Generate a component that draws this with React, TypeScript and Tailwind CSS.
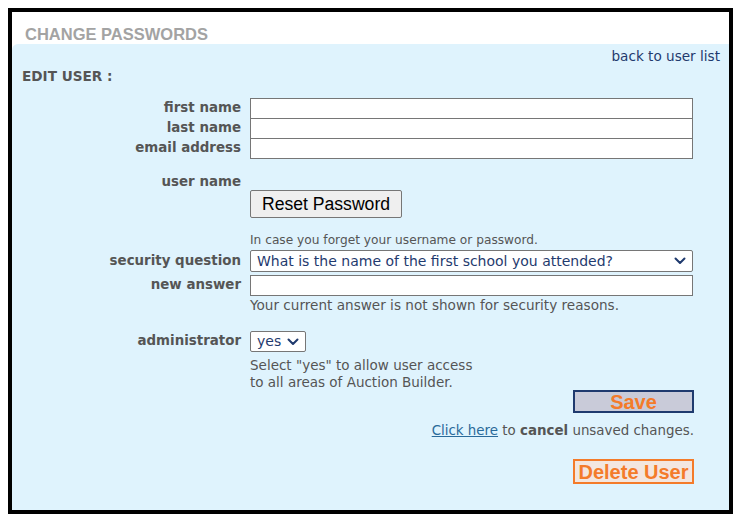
import React from "react";

const V = { fontFamily: '"DejaVu Sans", Verdana, sans-serif' };
const A = { fontFamily: '"Liberation Sans", Arial, sans-serif' };

function Chevron() {
  return (
    <svg width="12" height="8" viewBox="0 0 12 8" className="shrink-0">
      <path d="M1.5 1.5 L6 6 L10.5 1.5" fill="none" stroke="#1f3a6e" strokeWidth="2" strokeLinecap="round" strokeLinejoin="round" />
    </svg>
  );
}

function Label({ children, className = "" }: { children: React.ReactNode; className?: string }) {
  return (
    <div className={"w-[229px] shrink-0 text-right text-[13.4px] font-bold text-[#555]" + " " + className} style={V}>
      {children}
    </div>
  );
}

export default function App() {
  return (
    <div className="w-[741px] h-[518px] bg-white pt-[8px] pl-[8px]">
      <div className="w-[725px] h-[506px] border-4 border-black bg-white flex flex-col">
        <div className="h-[32px] shrink-0 pl-[13px] pt-[14px] text-[16.5px] leading-[17px] font-bold text-[#a3a3a3]" style={A}>
          CHANGE PASSWORDS
        </div>
        <div className="flex-1 bg-[#dff3fd] rounded-tl-[6px] relative">
          <div className="flex justify-end pr-[9px] pt-[4px] text-[13.6px] leading-[16px] text-[#1f3a6e]" style={V}>
            back to user list
          </div>
          <div className="pl-[10px] mt-[5px] text-[13.6px] leading-[14px] font-bold text-[#555]" style={V}>
            EDIT USER :
          </div>

          <div className="mt-[15px] flex flex-col">
            {["first name", "last name", "email address"].map((l, i) => (
              <div key={l} className={"flex items-center gap-[9px]" + (i > 0 ? " -mt-px" : "")}>
                <Label>{l}</Label>
                <div className="w-[443px] h-[21px] bg-white border border-[#767676]" />
              </div>
            ))}
          </div>

          <div className="mt-[15px] flex gap-[9px]">
            <Label className="leading-[16px]">user name</Label>
            <div className="pt-[16px]">
              <div className="w-[152px] h-[28px] bg-[#efefef] border border-[#767676] rounded-[2px] flex items-center justify-center text-[17.6px] text-black" style={A}>
                Reset Password
              </div>
            </div>
          </div>

          <div className="mt-[15px] flex gap-[9px]">
            <div className="w-[229px] shrink-0" />
            <div className="text-[12.2px] leading-[14px] text-[#555]" style={V}>In case you forget your username or password.</div>
          </div>

          <div className="mt-[3px] flex items-center gap-[9px]">
            <Label>security question</Label>
            <div className="w-[443px] h-[22px] bg-white border border-[#767676] rounded-[2px] flex items-center justify-between pl-[6px] pr-[6px] text-[14px] text-[#1f3a6e]" style={V}>
              <span>What is the name of the first school you attended?</span>
              <Chevron />
            </div>
          </div>

          <div className="mt-[3px] flex items-center gap-[9px]">
            <Label>new answer</Label>
            <div className="w-[443px] h-[21px] bg-white border border-[#767676]" />
          </div>

          <div className="mt-[1px] flex gap-[9px]">
            <div className="w-[229px] shrink-0" />
            <div className="text-[13.6px] leading-[16px] text-[#555]" style={V}>Your current answer is not shown for security reasons.</div>
          </div>

          <div className="mt-[18px] flex items-center gap-[9px]">
            <Label>administrator</Label>
            <div className="w-[56px] h-[21px] bg-white border border-[#767676] rounded-[2px] flex items-center gap-[6px] pl-[6px] text-[14px] text-[#1f3a6e]" style={V}>
              <span>yes</span>
              <Chevron />
            </div>
          </div>

          <div className="mt-[5px] flex gap-[9px]">
            <div className="w-[229px] shrink-0" />
            <div className="text-[13.5px] leading-[17px] text-[#555]" style={V}>
              Select "yes" to allow user access
              <br />
              to all areas of Auction Builder.
            </div>
          </div>

          <div className="flex flex-col items-end pr-[35px]">
            <div className="-mt-[1px] w-[121px] h-[23px] bg-[#c9cbd9] border-2 border-[#1f3a6e] flex items-center justify-center text-[20px] font-bold text-[#f47b2a]" style={A}>
              Save
            </div>
            <div className="mt-[10px] text-[13.4px] leading-[16px] text-[#555]" style={V}>
              <span className="underline text-[#2a6a9a]">Click here</span> to <b>cancel</b> unsaved changes.
            </div>
            <div className="mt-[20px] w-[121px] h-[25px] bg-[#f3e6df] border-2 border-[#f47b2a] flex items-center justify-center text-[20px] font-bold text-[#f47b2a]" style={A}>
              Delete User
            </div>
          </div>
        </div>
      </div>
    </div>
  );
}
